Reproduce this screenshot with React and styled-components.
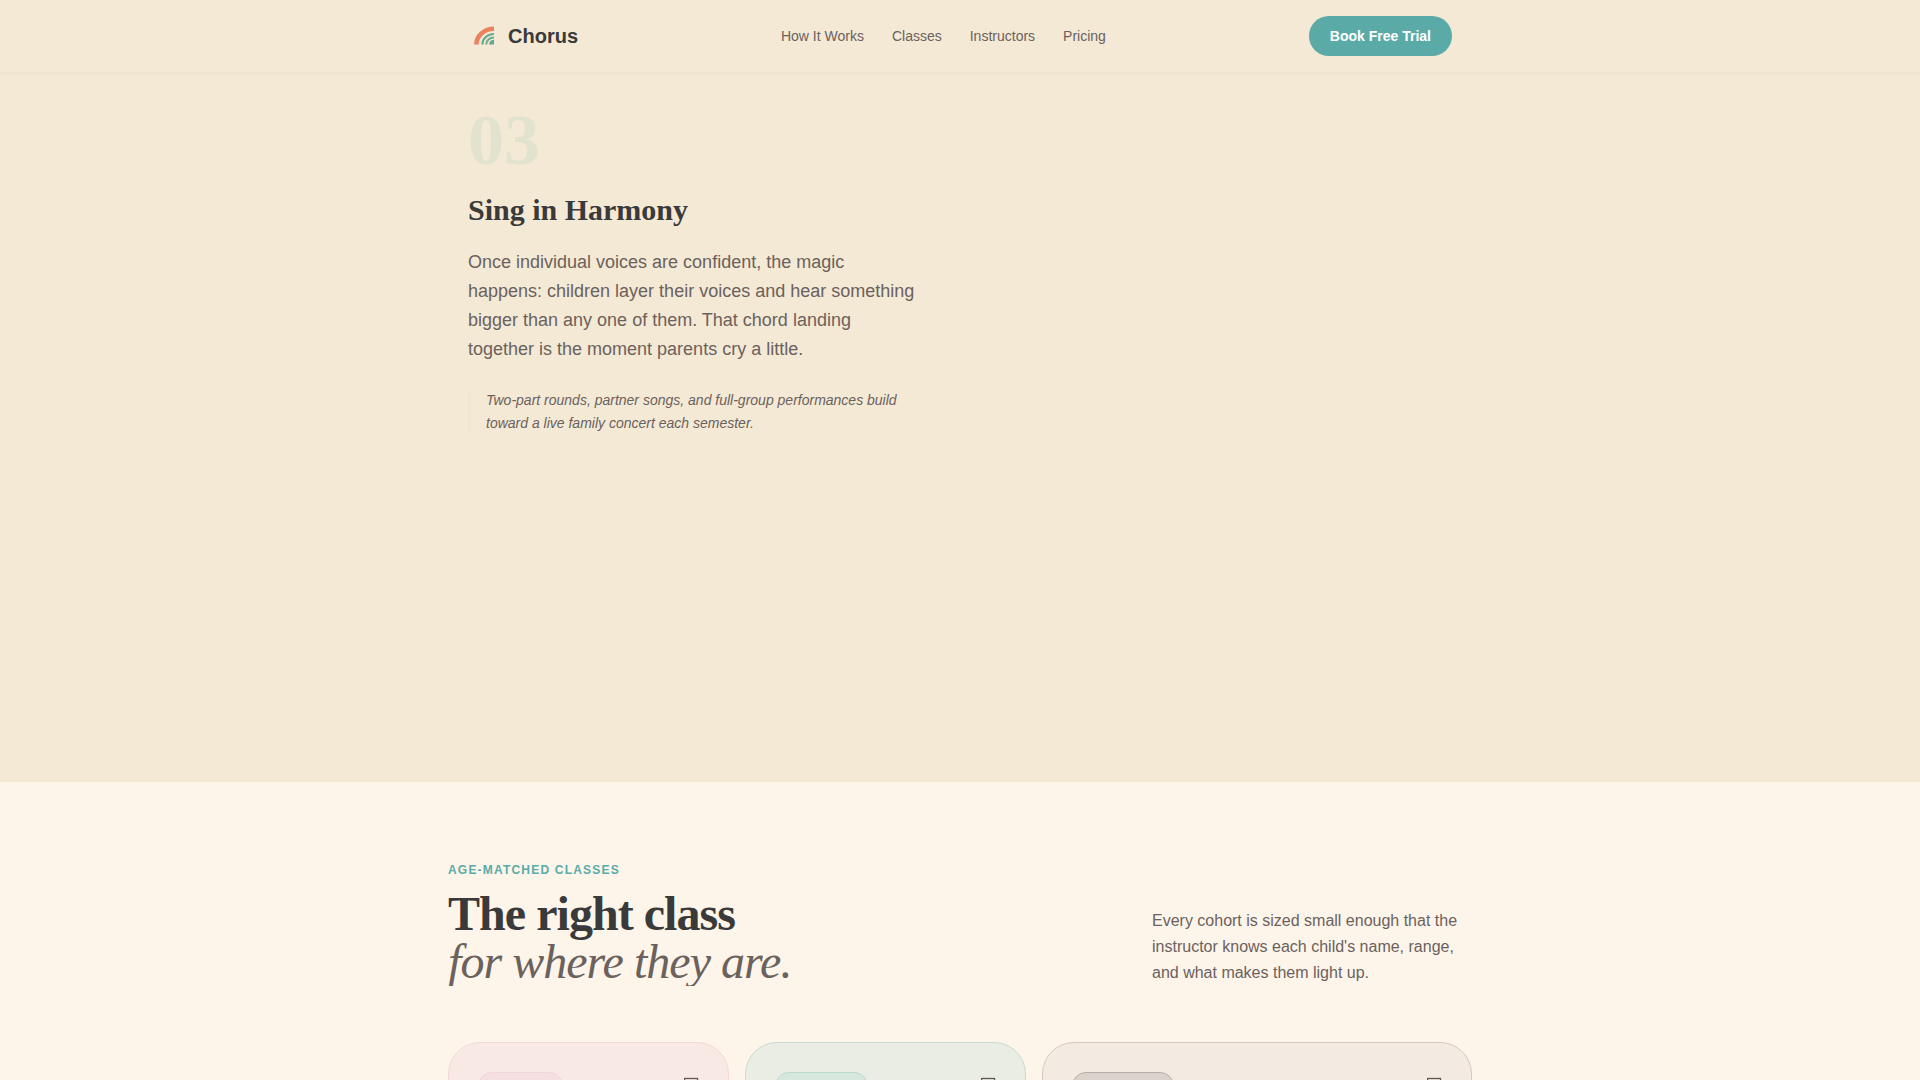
import React from 'react'
import styled, {createGlobalStyle} from 'styled-components';

const GlobalStyle=createGlobalStyle`
    :root{
        --sand: #f4e9d5;
        --cream: #fdf5ea;
        --ink: #3a3a3a;
        --inkSoft: #6b615d;
        --teal: #5aaba7;
        --serif: "Liberation Serif", serif;
    }
    *{
        box-sizing: border-box;
    }
    body{
        margin: 0;
        background: var(--cream);
        color: var(--inkSoft);
        font-family: "Liberation Sans", Arial, sans-serif;
    }
    h2, h3, p, ul{
        margin: 0;
        padding: 0;
    }
`;

const Page=styled.div`
    height: 100vh;
    overflow: hidden;
`;

const Header=styled.header`
    position: relative;
    background: var(--sand);
    border-bottom: 1px solid #efe3cf;
    box-shadow: 0 1px 2px rgba(107, 97, 93, 0.08);
`;

const NavWrapper=styled.nav`
    display: flex;
    align-items: center;
    justify-content: space-between;
    max-width: 1024px;
    margin: 0 auto;
    padding: 16px 20px;
`;

const Brand=styled.a`
    display: flex;
    align-items: center;
    gap: 12px;
    color: var(--ink);
    font-size: 20px;
    font-weight: 700;
    text-decoration: none;
`;

const NavList=styled.ul`
    display: flex;
    gap: 28px;
    list-style: none;
`;

const NavLink=styled.a`
    color: var(--inkSoft);
    font-size: 14px;
    text-decoration: none;
`;

const TrialButton=styled.button`
    height: 40px;
    padding: 0 21px;
    border: 0;
    border-radius: 20px;
    background: var(--teal);
    color: #fff;
    font: 700 14px "Liberation Sans", Arial, sans-serif;
    cursor: pointer;
`;

const StepSection=styled.section`
    min-height: 709px;
    background: var(--sand);
`;

const StepGrid=styled.div`
    display: grid;
    grid-template-columns: 1fr 1fr;
    gap: 64px;
    max-width: 1024px;
    margin: 0 auto;
    padding: 31px 20px;
`;

const StepBody=styled.div`
    max-width: 450px;
`;

const StepNumber=styled.div`
    margin-bottom: 16px;
    color: #e2e3cf;
    font: 700 72px/72px var(--serif);
`;

const StepTitle=styled.h3`
    margin-bottom: 20px;
    color: var(--ink);
    font: 700 30px/36px var(--serif);
`;

const StepText=styled.p`
    margin-bottom: 25px;
    font-size: 18px;
    line-height: 29px;
`;

const StepNote=styled.p`
    padding-left: 16px;
    border-left: 2px solid #f0e6d3;
    font-size: 14px;
    font-style: italic;
    line-height: 23px;
`;

const ClassesSection=styled.section`
    max-width: 1024px;
    margin: 0 auto;
    padding: 80px 0;
`;

const SectionHead=styled.div`
    display: flex;
    align-items: flex-end;
    justify-content: space-between;
    margin-bottom: 56px;
`;

const Eyebrow=styled.p`
    margin-bottom: 12px;
    color: var(--teal);
    font-size: 12px;
    font-weight: 700;
    line-height: 16px;
    letter-spacing: 0.1em;
    text-transform: uppercase;
`;

const SectionTitle=styled.h2`
    overflow: hidden;
    color: var(--ink);
    font: 700 48px/48px var(--serif);
    letter-spacing: -0.02em;

    em{
        display: block;
        color: var(--inkSoft);
        font-weight: 400;
    }
`;

const SectionIntro=styled.p`
    width: 320px;
    font-size: 16px;
    line-height: 26px;
`;

const CardGrid=styled.div`
    display: grid;
    grid-template-columns: 17fr 17fr 26fr;
    gap: 16px;
`;

const Card=styled.article`
    display: flex;
    align-items: flex-start;
    justify-content: space-between;
    min-height: 320px;
    padding: 29px;
    border: 1px solid ${props => props.$tone.line};
    border-radius: 32px;
    background: ${props => props.$tone.fill};
`;

const AgeBadge=styled.span`
    width: ${props => props.$width}px;
    height: 28px;
    border: 1px solid ${props => props.$tone.badgeLine};
    border-radius: 14px;
    background: ${props => props.$tone.badge};
`;

const links=['How It Works', 'Classes', 'Instructors', 'Pricing'];

const cards=[
    {
        id: 'rose',
        badgeWidth: 85,
        tone: {fill: '#f9e9e5', line: '#f1dad7', badge: '#f6dfe0', badgeLine: '#f1d5d7'},
    },
    {
        id: 'mint',
        badgeWidth: 93,
        tone: {fill: '#eaede4', line: '#c9dbd0', badge: '#d6e7dd', badgeLine: '#bcd9ce'},
    },
    {
        id: 'clay',
        badgeWidth: 102,
        tone: {fill: '#f3eae1', line: '#d4cac2', badge: '#dbd2cc', badgeLine: '#b7ada7'},
    },
];

function Logo() {
    return (
        <svg width="28" height="28" viewBox="0 0 28 28" fill="none" aria-hidden="true">
            <path d="M8.4 22.4A17.6 15.6 0 0 1 26 6.8" stroke="#e8825f" strokeWidth="4.6"/>
            <path d="M14.4 22.4A11.6 10.4 0 0 1 26 12" stroke="#6aab8f" strokeWidth="2.2"/>
            <path d="M18.2 22.4A7.8 7 0 0 1 26 15.4" stroke="#6aab8f" strokeWidth="2"/>
            <path d="M21 22.4A5 4.6 0 0 1 26 17.8V22.4Z" fill="#5fa88f"/>
        </svg>
    );
}

function CardIcon() {
    return (
        <svg width="15" height="32" viewBox="0 0 15 32" fill="none" aria-hidden="true">
            <rect x="0.5" y="6.5" width="13" height="19" stroke="#5f5853" strokeWidth="1.3"/>
        </svg>
    );
}

function App() {
    return (
        <Page>
            <GlobalStyle/>
            <Header>
                <NavWrapper>
                    <Brand href="#top">
                        <Logo/>
                        Chorus
                    </Brand>
                    <NavList>
                        {links.map(link => (
                            <li key={link}>
                                <NavLink href="#classes">{link}</NavLink>
                            </li>
                        ))}
                    </NavList>
                    <TrialButton type="button">Book Free Trial</TrialButton>
                </NavWrapper>
            </Header>
            <StepSection>
                <StepGrid>
                    <StepBody>
                        <StepNumber>03</StepNumber>
                        <StepTitle>Sing in Harmony</StepTitle>
                        <StepText>
                            Once individual voices are confident, the magic happens: children
                            layer their voices and hear something bigger than any one of them.
                            That chord landing together is the moment parents cry a little.
                        </StepText>
                        <StepNote>
                            Two-part rounds, partner songs, and full-group performances build
                            toward a live family concert each semester.
                        </StepNote>
                    </StepBody>
                </StepGrid>
            </StepSection>
            <ClassesSection id="classes">
                <SectionHead>
                    <div>
                        <Eyebrow>Age-matched classes</Eyebrow>
                        <SectionTitle>
                            The right class
                            <em>for where they are.</em>
                        </SectionTitle>
                    </div>
                    <SectionIntro>
                        Every cohort is sized small enough that the instructor knows each
                        child's name, range, and what makes them light up.
                    </SectionIntro>
                </SectionHead>
                <CardGrid>
                    {cards.map(card => (
                        <Card key={card.id} $tone={card.tone}>
                            <AgeBadge $tone={card.tone} $width={card.badgeWidth}/>
                            <CardIcon/>
                        </Card>
                    ))}
                </CardGrid>
            </ClassesSection>
        </Page>
    )
}

export default App;
